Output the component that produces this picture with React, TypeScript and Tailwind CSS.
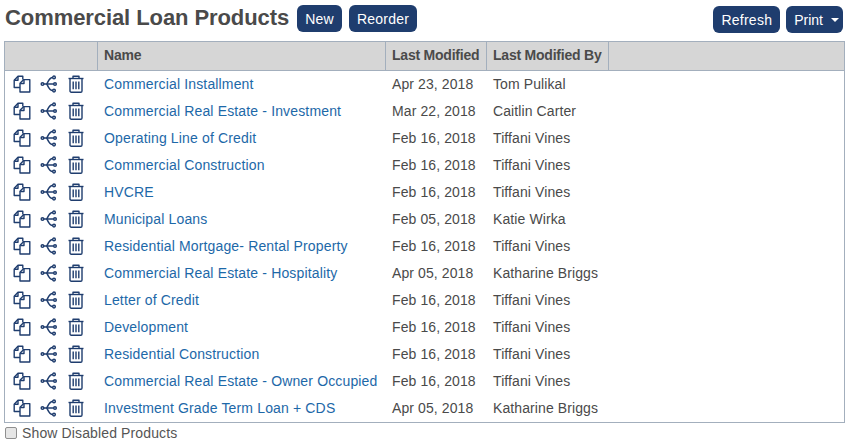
import { Fragment } from 'react'

const products = [
  ['Commercial Installment', 'Apr 23, 2018', 'Tom Pulikal'],
  ['Commercial Real Estate - Investment', 'Mar 22, 2018', 'Caitlin Carter'],
  ['Operating Line of Credit', 'Feb 16, 2018', 'Tiffani Vines'],
  ['Commercial Construction', 'Feb 16, 2018', 'Tiffani Vines'],
  ['HVCRE', 'Feb 16, 2018', 'Tiffani Vines'],
  ['Municipal Loans', 'Feb 05, 2018', 'Katie Wirka'],
  ['Residential Mortgage- Rental Property', 'Feb 16, 2018', 'Tiffani Vines'],
  ['Commercial Real Estate - Hospitality', 'Apr 05, 2018', 'Katharine Briggs'],
  ['Letter of Credit', 'Feb 16, 2018', 'Tiffani Vines'],
  ['Development', 'Feb 16, 2018', 'Tiffani Vines'],
  ['Residential Construction', 'Feb 16, 2018', 'Tiffani Vines'],
  ['Commercial Real Estate - Owner Occupied', 'Feb 16, 2018', 'Tiffani Vines'],
  ['Investment Grade Term Loan + CDS', 'Apr 05, 2018', 'Katharine Briggs'],
]

function CopyIcon() {
  return (
    <svg width="18" height="18" viewBox="0 0 18 18" fill="none" stroke="#1f3d6e" strokeWidth="1.4" strokeLinejoin="round">
      <path d="M7 12.5H1.2V5.2L5 1.2h4.8v3.4" />
      <path d="M5 1.5v3.7H1.4" />
      <path d="M7 17V8.2l3.800-3.600h6V17z" />
      <path d="M11 4.800v3.700H7.200" />
    </svg>
  )
}

function BranchIcon() {
  return (
    <svg width="18" height="18" viewBox="0 0 18 18" fill="none" stroke="#1f3d6e" strokeWidth="1.5">
      <circle cx="2.500" cy="9" r="1.300" />
      <circle cx="14" cy="2.400" r="1.300" />
      <circle cx="15" cy="9" r="1.300" />
      <circle cx="14" cy="15.600" r="1.300" />
      <path d="M3.800 9h9.900" />
      <path d="M12.700 2.400C9.300 2.400 8.300 6.200 6.800 9c1.500 2.800 2.500 6.600 5.900 6.600" />
    </svg>
  )
}

function TrashIcon() {
  return (
    <svg width="16" height="18" viewBox="0 0 16 18" fill="none" stroke="#1f3d6e" strokeWidth="1.4" strokeLinejoin="round">
      <path d="M0.500 3.500h15" />
      <path d="M5 3.300V1.200h6v2.100" />
      <path d="M2 3.500V16a1.200 1.200 0 0 0 1.200 1.200h9.600A1.200 1.200 0 0 0 14 16V3.500" />
      <path d="M5.200 6.500v7.800M8 6.500v7.800M10.800 6.500v7.800" />
    </svg>
  )
}

function Btn({ children }: { children: React.ReactNode }) {
  return (
    <button className="h-[27px] rounded-[6px] bg-[#1f3d6e] px-[8px] text-[14px] leading-none tracking-[0.25px] text-white">
      {children}
    </button>
  )
}

export default function App() {
  return (
    <div className="h-[448px] w-[850px] overflow-hidden bg-white font-['Liberation_Sans',Arial,sans-serif] text-[14px] text-[#4a4a4a]">
      <div className="flex items-start pl-[5px] pr-[7px] pt-[5px]">
        <h1 className="mr-[8px] text-[22px] font-bold leading-[25px] tracking-[-0.08px] text-[#4a4a4a]">
          Commercial Loan Products
        </h1>
        <div className="flex gap-[7px]">
          <Btn>New</Btn>
          <Btn>Reorder</Btn>
        </div>
        <div className="ml-auto mt-px flex gap-[6px]">
          <Btn>Refresh</Btn>
          <button className="flex h-[27px] items-center rounded-[6px] bg-[#1f3d6e] pl-[8px] pr-[4px] text-[14px] leading-none text-white">
            Print
            <span className="ml-[8px] mt-px h-0 w-0 border-x-[4px] border-t-[4px] border-x-transparent border-t-white" />
          </button>
        </div>
      </div>

      <div className="ml-[4px] mt-[8px] w-[841px] border border-b-0 border-[#a3afbd]">
        <div className="grid h-[29px] grid-cols-[93px_288px_101px_122px_1fr] items-stretch border-b border-[#a3afbd] bg-[#d6d6d6] font-bold leading-[27px] tracking-[-0.22px]">
          <div className="border-r border-[#a3afbd]" />
          <div className="border-r border-[#a3afbd] pl-[6px]">Name</div>
          <div className="border-r border-[#a3afbd] pl-[6px]">Last Modified</div>
          <div className="border-r border-[#a3afbd] pl-[6px]">Last Modified By</div>
          <div />
        </div>
        <div className="grid grid-cols-[93px_288px_101px_122px_1fr] leading-[27px] tracking-[0.1px]">
          {products.map(([name, date, by]) => (
            <Fragment key={name}>
              <div className="flex h-[27px] items-center pb-[2px] pl-[8px]">
                <span className="mr-[9px] flex"><CopyIcon /></span>
                <span className="mr-[10px] flex"><BranchIcon /></span>
                <span className="flex"><TrashIcon /></span>
              </div>
              <a className="pl-[6px] tracking-[0.15px] text-[#1d68a8]">{name}</a>
              <div className="pl-[6px]">{date}</div>
              <div className="pl-[6px]">{by}</div>
              <div />
            </Fragment>
          ))}
        </div>
      </div>
      <div className="ml-[4px] w-[841px] border-t border-[#a3afbd] pt-[2px]">
        <label className="flex items-center leading-[16px] tracking-[0.13px] text-[#555]">
          <span className="ml-px mr-[5px] h-[12px] w-[12px] rounded-[2px] border border-[#8f8f8f] bg-[#e6e6e6]" />
          Show Disabled Products
        </label>
      </div>
    </div>
  )
}
